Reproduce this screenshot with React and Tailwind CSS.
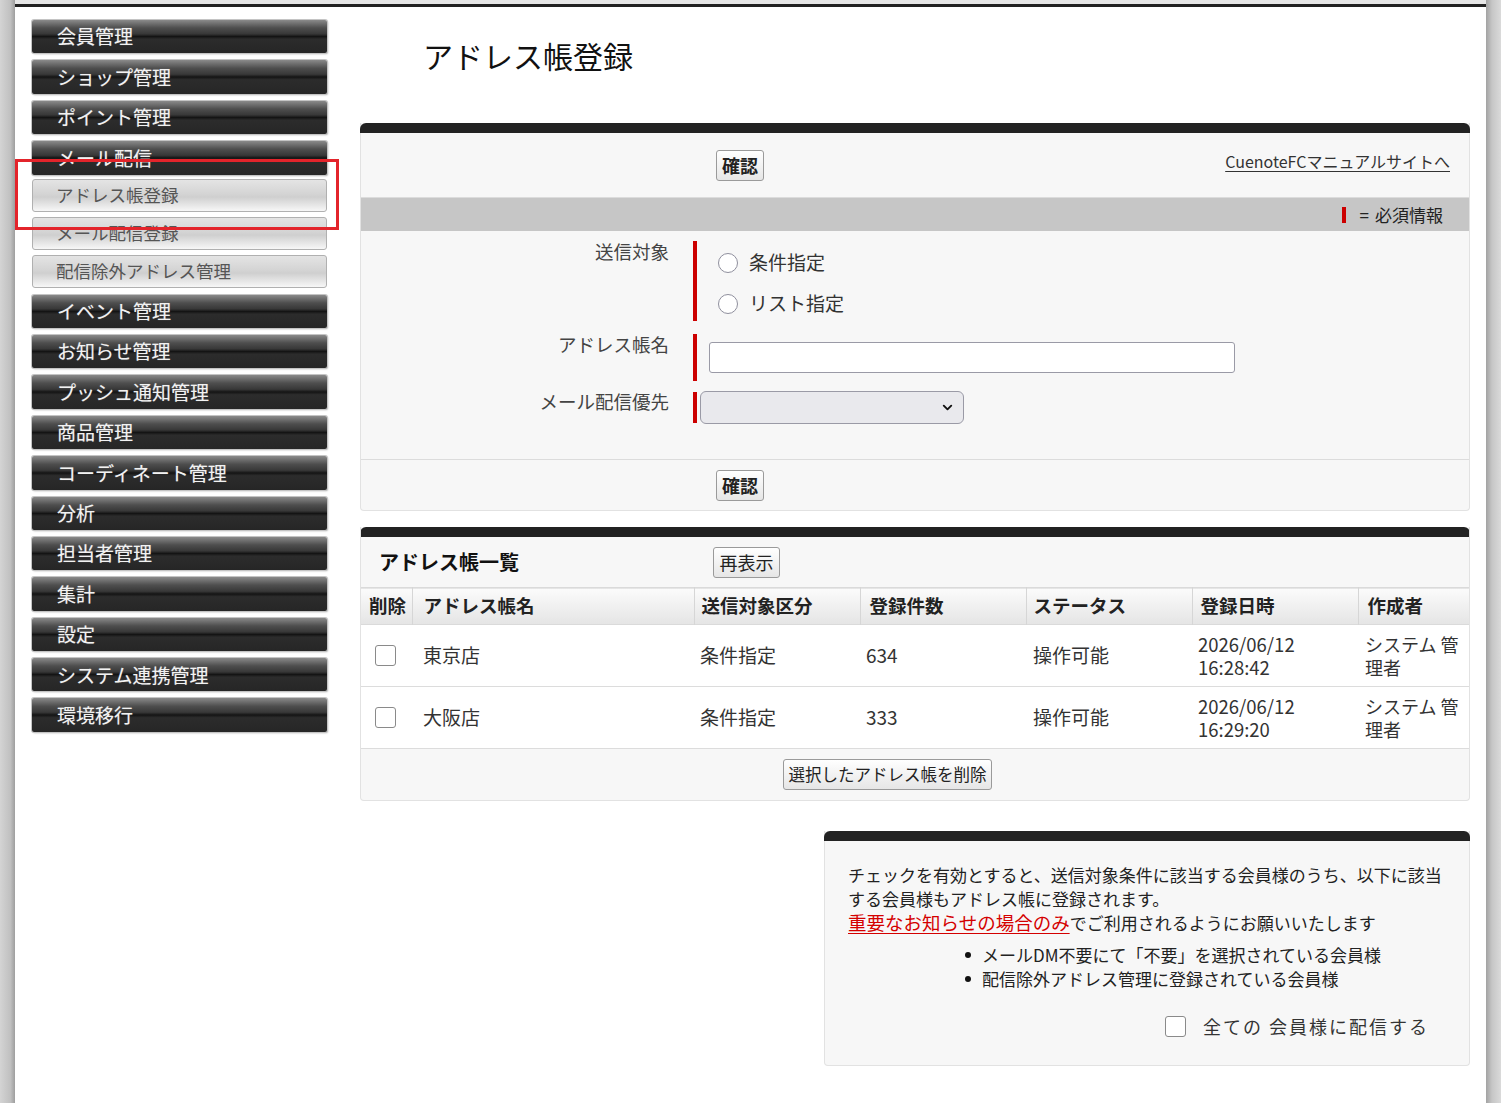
import { ChevronDown } from 'lucide-react'

const darkMenu1 = ['会員管理', 'ショップ管理', 'ポイント管理', 'メール配信']
const subMenu = ['アドレス帳登録', 'メール配信登録', '配信除外アドレス管理']
const darkMenu2 = [
  'イベント管理', 'お知らせ管理', 'プッシュ通知管理', '商品管理', 'コーディネート管理',
  '分析', '担当者管理', '集計', '設定', 'システム連携管理', '環境移行',
]

const rows = [
  { name: '東京店', target: '条件指定', count: '634', status: '操作可能', date: ['2026/06/12', '16:28:42'] },
  { name: '大阪店', target: '条件指定', count: '333', status: '操作可能', date: ['2026/06/12', '16:29:20'] },
]

function DarkItem({ label, first }) {
  return (
    <div
      className={`flex h-[33.4px] items-center rounded-[2px] pl-[25px] text-[19px] text-[#f2f2f2] shadow-[0_0_0_1px_#c4c4c4,1px_1px_2px_rgba(0,0,0,0.35)] [text-shadow:0_0_1px_rgba(255,255,255,0.4)] bg-[linear-gradient(to_bottom,#8a8a8a_0%,#4e4e4e_24%,#383838_42%,#141414_50%,#2c2c2c_58%,#262626_100%)] ${first ? '' : 'mt-[7px]'}`}
    >
      {label}
    </div>
  )
}

function SubItem({ label, first }) {
  return (
    <div
      className={`flex h-[33px] items-center rounded-[3px] border border-[#b0b0b0] pl-[23px] text-[17.5px] text-[#555] bg-[linear-gradient(to_bottom,#e4e4e4_0%,#d4d4d4_45%,#cfcfcf_55%,#f7f7f7_100%)] ${first ? 'mt-[4px]' : 'mt-[5px]'}`}
    >
      {label}
    </div>
  )
}

function Btn({ children, className = '' }) {
  return (
    <button
      type="button"
      className={`h-[31px] whitespace-nowrap rounded-[3px] border border-[#9a9a9a] bg-[linear-gradient(to_bottom,#ffffff,#e6e6e6)] px-[4px] leading-none text-[#222] ${className}`}
    >
      {children}
    </button>
  )
}

function Radio({ label }) {
  return (
    <label className="flex h-[41px] items-center">
      <span className="h-[20px] w-[20px] rounded-full border border-[#8f8f9d] bg-white" />
      <span className="ml-[11px] text-[19px] text-[#333]">{label}</span>
    </label>
  )
}

function Checkbox() {
  return <span className="block h-[21px] w-[21px] rounded-[3px] border border-[#8a8a8a] bg-white" />
}

function PanelTop() {
  return <div className="h-[10px] rounded-t-[6px] bg-[#222]" />
}

export default function App() {
  return (
    <div className="flex min-h-[1103px] bg-[#e6e6e6] font-['Noto_Sans_CJK_JP','Noto_Sans',sans-serif]">
      <div className="w-[15px] shrink-0 bg-[linear-gradient(to_right,#d4d4d4,#c0c0c0_70%,#9e9e9e)]" />

      <div className="relative mt-[4px] flex w-[1471px] shrink-0 border-t-[3px] border-[#222] bg-white">
        {/* side menu */}
        <nav className="w-[312px] shrink-0 pl-[17px] pt-[13px]">
          {darkMenu1.map((m, i) => (
            <DarkItem key={m} label={m} first={i === 0} />
          ))}
          {subMenu.map((m, i) => (
            <SubItem key={m} label={m} first={i === 0} />
          ))}
          {darkMenu2.map(m => (
            <DarkItem key={m} label={m} />
          ))}
        </nav>

        {/* highlight frame around the current menu entry */}
        <div className="absolute left-0 top-[152px] h-[71px] w-[324px] border-[3px] border-[#e3242b]" />

        <main className="ml-[33px] w-[1110px] shrink-0">
          <h1 className="ml-[63px] mt-[28px] h-[40px] text-[30px] leading-[40px] text-[#111]">アドレス帳登録</h1>

          {/* registration form */}
          <section className="mt-[48px] rounded-b-[4px] border-x border-b border-[#e2e2e2] bg-[#f7f7f7]">
            <div className="-mx-px">
              <PanelTop />
            </div>
            <div className="relative flex h-[65px] items-center border-b border-[#dcdcdc]">
              <Btn className="ml-[355px] w-[48px] text-[18px] font-bold">確認</Btn>
              <a href="#" className="absolute right-[19px] top-[16px] text-[16px] text-[#333] underline underline-offset-[3px]">
                CuenoteFCマニュアルサイトへ
              </a>
            </div>
            <div className="flex h-[33px] items-center justify-end bg-[#c6c6c6] pr-[26px] text-[17px] text-[#222]">
              <span className="h-[16px] w-[4px] bg-[#cc0000]" />
              <span className="ml-[14px]">=</span>
              <span className="ml-[6px]">必須情報</span>
            </div>

            <div className="pb-[36px] pt-[10px]">
              <div className="flex">
                <div className="-mt-[2px] w-[332px] pr-[24px] text-right text-[18.5px] leading-[24px] text-[#444]">送信対象</div>
                <div className="h-[80px] border-l-4 border-[#cc0000] pl-[21px] pt-px">
                  <Radio label="条件指定" />
                  <Radio label="リスト指定" />
                </div>
              </div>
              <div className="mt-[13px] flex">
                <div className="-mt-[2px] w-[332px] pr-[24px] text-right text-[18.5px] leading-[24px] text-[#444]">アドレス帳名</div>
                <div className="h-[47px] border-l-4 border-[#cc0000] pl-[12px] pt-[8px]">
                  <input type="text" className="h-[31px] w-[526px] rounded-[3px] border border-[#9a9aa6] bg-white outline-none" />
                </div>
              </div>
              <div className="mt-[11px] flex">
                <div className="-mt-[3px] w-[332px] pr-[24px] text-right text-[18.5px] leading-[24px] text-[#444]">メール配信優先</div>
                <div className="h-[31px] border-l-4 border-[#cc0000] pl-[3px]">
                  <div className="-mt-px flex h-[33px] w-[264px] items-center justify-end rounded-[6px] border border-[#9a9aa6] bg-[#e9e9ed] pr-[8px]">
                    <ChevronDown size={15} strokeWidth={3} className="text-[#111]" />
                  </div>
                </div>
              </div>
            </div>

            <div className="flex h-[51px] items-center border-t border-[#dcdcdc]">
              <Btn className="ml-[355px] w-[48px] text-[18px] font-bold">確認</Btn>
            </div>
          </section>

          {/* address book list */}
          <section className="mt-[16px] overflow-hidden rounded-b-[4px] border-x border-b border-[#e2e2e2] bg-[#f7f7f7]">
            <div className="-mx-px">
              <PanelTop />
            </div>
            <div className="flex h-[50px] items-center">
              <h2 className="ml-[18px] w-[334px] text-[20px] font-bold text-[#111]">アドレス帳一覧</h2>
              <Btn className="w-[67px] text-[18px]">再表示</Btn>
            </div>
            <table className="w-full table-fixed border-collapse text-left">
              <colgroup>
                <col className="w-[51px]" />
                <col className="w-[282px]" />
                <col className="w-[166px]" />
                <col className="w-[166px]" />
                <col className="w-[166px]" />
                <col className="w-[166px]" />
                <col />
              </colgroup>
              <thead>
                <tr className="h-[37px] border-y border-[#dadada] bg-[linear-gradient(to_bottom,#fbfbfb,#e5e5e5)] text-[18.5px] font-bold text-[#222]">
                  <th className="border-r border-[#d6d6d6] pl-[8px] font-bold">削除</th>
                  <th className="border-r border-[#d6d6d6] pl-[11px] font-bold">アドレス帳名</th>
                  <th className="border-r border-[#d6d6d6] pl-[7px] font-bold">送信対象区分</th>
                  <th className="border-r border-[#d6d6d6] pl-[9px] font-bold">登録件数</th>
                  <th className="border-r border-[#d6d6d6] pl-[7px] font-bold">ステータス</th>
                  <th className="border-r border-[#d6d6d6] pl-[8px] font-bold">登録日時</th>
                  <th className="pl-[9px] font-bold">作成者</th>
                </tr>
              </thead>
              <tbody className="bg-white text-[19px] text-[#333]">
                {rows.map(r => (
                  <tr key={r.name} className="h-[62px] border-b border-[#dcdcdc]">
                    <td className="pl-[14px]"><Checkbox /></td>
                    <td className="pl-[11px]">{r.name}</td>
                    <td className="pl-[6px]">{r.target}</td>
                    <td className="pl-[6px]">{r.count}</td>
                    <td className="pl-[7px]">{r.status}</td>
                    <td className="pl-[6px] text-[18.5px] leading-[23px]">
                      <div>{r.date[0]}</div>
                      <div>{r.date[1]}</div>
                    </td>
                    <td className="pl-[7px] text-[18px] leading-[23px]">
                      <div className="whitespace-nowrap">システム 管</div>
                      <div>理者</div>
                    </td>
                  </tr>
                ))}
              </tbody>
            </table>
            <div className="flex h-[51px] items-center">
              <Btn className="ml-[422px] w-[209px] text-[16.5px]">選択したアドレス帳を削除</Btn>
            </div>
          </section>

          {/* delivery note */}
          <section className="ml-[464px] mt-[30px] rounded-b-[4px] border-x border-b border-[#e2e2e2] bg-[#f7f7f7]">
            <div className="-mx-px">
              <PanelTop />
            </div>
            <div className="pb-[27px] pl-[23px] pr-[20px] pt-[22px] text-[17px] leading-[24px] text-[#222]">
              <p>チェックを有効とすると、送信対象条件に該当する会員様のうち、以下に該当する会員様もアドレス帳に登録されます。</p>
              <p className="h-[24px]">
                <span className="text-[18.5px] leading-none text-[#d40000] underline underline-offset-[3px]">重要なお知らせの場合のみ</span>
                でご利用されるようにお願いいたします
              </p>
              <ul className="ml-[117px] mt-[8px]">
                <li className="flex items-center">
                  <span className="mr-[11px] h-[6px] w-[6px] rounded-full bg-[#111]" />
                  メールDM不要にて「不要」を選択されている会員様
                </li>
                <li className="flex items-center">
                  <span className="mr-[11px] h-[6px] w-[6px] rounded-full bg-[#111]" />
                  配信除外アドレス管理に登録されている会員様
                </li>
              </ul>
              <label className="mt-[23px] flex items-center justify-end pr-[20px]">
                <Checkbox />
                <span className="ml-[17px] text-[18px] tracking-[2px] text-[#333]">全ての 会員様に配信する</span>
              </label>
            </div>
          </section>
        </main>
      </div>

      <div className="flex-1 bg-[linear-gradient(to_right,#a2a2a2,#c6c6c6_40%,#dadada)]" />
    </div>
  )
}
